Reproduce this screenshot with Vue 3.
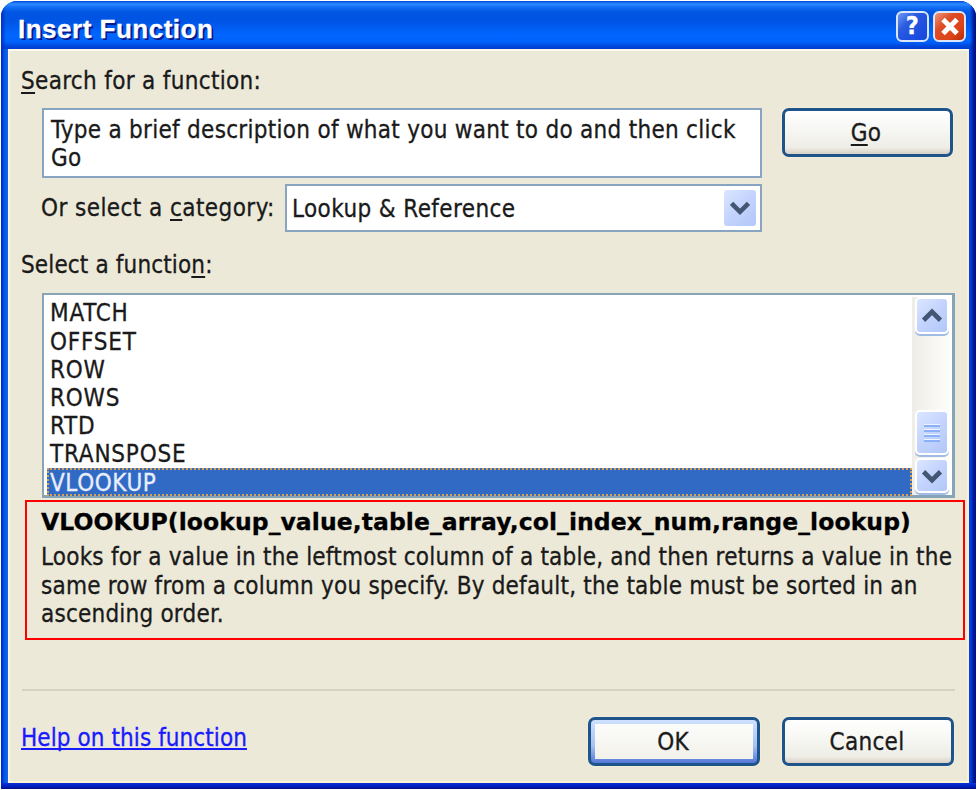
<template>
  <div class="dialog">
    <header class="title-bar">
      <h1 class="title-bar__text">Insert Function</h1>
      <button class="caption caption--help" aria-label="Help">?</button>
      <button class="caption caption--close" aria-label="Close">
        <svg viewBox="0 0 24 24" width="24" height="24">
          <path d="M5 4.5L19 18.5M19 4.5L5 18.5" stroke="#fff" stroke-width="5" />
        </svg>
      </button>
    </header>
    <main class="body">
      <label class="label label--search"><u>S</u>earch for a function:</label>
      <div class="search">
        <div class="search__fields">
          <div class="field search__input">
            Type a brief description of what you want to do and then click<br />Go
          </div>
          <div class="category">
            <label class="category__label">Or select a <u>c</u>ategory:</label>
            <div class="field category__select">
              <span class="category__value">Lookup &amp; Reference</span>
              <span class="arrow arrow--select">
                <svg viewBox="0 0 34 39" width="34" height="39">
                  <path d="M8 14L17 23L26 14" />
                </svg>
              </span>
            </div>
          </div>
        </div>
        <button class="btn btn--go"><span><u>G</u>o</span></button>
      </div>
      <label class="label label--select">Select a functio<u>n</u>:</label>
      <div class="list">
        <ul class="list__items">
          <li
            v-for="fn in functions"
            :key="fn"
            class="list__item"
            :class="{ 'list__item--selected': fn === selected }"
            @click="selected = fn"
          >
            {{ fn }}
          </li>
        </ul>
        <div class="scrollbar">
          <span class="arrow">
            <svg viewBox="0 0 32 34" width="32" height="34">
              <path d="M7 21.5L16 12.5L25 21.5" />
            </svg>
          </span>
          <span class="arrow scrollbar__thumb">
            <i v-for="n in 4" :key="n" class="scrollbar__grip"></i>
          </span>
          <span class="arrow">
            <svg viewBox="0 0 32 34" width="32" height="34">
              <path d="M7 12.5L16 21.5L25 12.5" />
            </svg>
          </span>
        </div>
      </div>
      <section class="details">
        <h2 class="details__syntax">
          VLOOKUP(lookup_value,table_array,col_index_num,range_lookup)
        </h2>
        <p class="details__text">
          Looks for a value in the leftmost column of a table, and then returns a value in the<br />
          same row from a column you specify. By default, the table must be sorted in an<br />
          ascending order.
        </p>
      </section>
      <hr class="divider" />
      <footer class="footer">
        <a class="footer__help" href="#">Help on this function</a>
        <button class="btn btn--default">OK</button>
        <button class="btn">Cancel</button>
      </footer>
    </main>
  </div>
</template>

<script setup>
import { ref } from "vue";

const functions = [
  "MATCH",
  "OFFSET",
  "ROW",
  "ROWS",
  "RTD",
  "TRANSPOSE",
  "VLOOKUP",
];
const selected = ref("VLOOKUP");
</script>

<style>
body {
  margin: 0;
  background: #fff;
}
</style>

<style scoped>
* {
  box-sizing: border-box;
}

.dialog {
  width: 975px;
  height: 788px;
  margin: 1px 0 0 1px;
  display: flex;
  flex-direction: column;
  overflow: hidden;
  border-radius: 16px 16px 0 0;
  background:
    linear-gradient(#0831d9 0, #0020c0 3px, #00108c 6px) bottom / 100% 6px no-repeat,
    linear-gradient(90deg, #0020c8 0, #0054e3 3px, #1566ee 7px) left / 50% 100% no-repeat,
    linear-gradient(270deg, #00107c 0, #0018a0 3px, #0040e0 6px) right / 50% 100% no-repeat;
  font-family: "DejaVu Sans Condensed", "DejaVu Sans", sans-serif;
  font-stretch: condensed;
  font-size: 24px;
  line-height: 28.2px;
  letter-spacing: 0.28px;
  color: #1a1a1a;
  -webkit-text-stroke-width: 0.3px;
}

button {
  padding: 0;
  font: inherit;
  letter-spacing: inherit;
  color: inherit;
}

u {
  text-decoration-thickness: 2px;
  text-underline-offset: 3px;
  text-decoration-skip-ink: none;
}

.title-bar {
  display: flex;
  align-items: flex-start;
  flex: none;
  height: 48px;
  padding: 10px 10px 0 17px;
  background:
    linear-gradient(270deg, #00107c 0, #001a9c 2px, rgba(0, 56, 200, 0) 6px),
    linear-gradient(90deg, #0030c8 0, rgba(0, 56, 200, 0) 5px),
    linear-gradient(#0048d8 0, #2e8cff 3px, #1470f4 6px, #0055e2 11px, #0054e4 20px, #0066ff 34px, #0062fa 41px, #0048dc 45px, #003ccc 48px);
}

.title-bar__text {
  flex: 1;
  margin: 4px 0 0;
  font-family: "Liberation Sans", sans-serif;
  font-size: 26px;
  font-weight: 700;
  letter-spacing: 0.5px;
  line-height: 28px;
  color: #fff;
  text-shadow: 2px 2px 0 #07198c;
}

.caption {
  display: flex;
  align-items: center;
  justify-content: center;
  width: 33px;
  height: 31px;
  margin-left: 4px;
  border: 2px solid #dce6fb;
  border-radius: 6px;
  color: #fff;
}

.caption--help {
  background: linear-gradient(135deg, #6f98f5, #2a5be0 35%, #1c4ee0 70%, #164adc);
  font-size: 25px;
  font-weight: 700;
}

.caption--close {
  background: linear-gradient(135deg, #ef967c, #dd4c26 35%, #dc4318 70%, #b82e06);
}

.body {
  flex: 1;
  margin: 0 7px 6px;
  padding: 16px 13px 0 12px;
  border: 2px solid #fbf3dc;
  border-bottom-color: #fff3d4;
  border-top-color: #fff8e8;
  border-right-color: #faf0d4;
  background: #ece9d8;
}

.label {
  display: block;
  margin-left: -1px;
}

.label--search {
  letter-spacing: 0.32px;
}

.search {
  display: flex;
  justify-content: space-between;
  margin: 13px 1px 0 20px;
}

.search__fields {
  width: 720px;
}

.field {
  border: 2px solid #87a5c0;
  background: #fff;
}

.search__input {
  height: 70px;
  padding: 6px 0 0 7px;
  white-space: nowrap;
}

.category {
  display: flex;
  justify-content: space-between;
  margin-top: 6px;
}

.category__label {
  margin-left: -1px;
  padding-top: 10px;
  letter-spacing: 0.43px;
  white-space: nowrap;
}

.category__select {
  display: flex;
  flex: none;
  justify-content: space-between;
  width: 477px;
  height: 48px;
  padding: 2px 2px 2px 5px;
}

.category__value {
  padding-top: 7px;
  letter-spacing: 0.4px;
}

.arrow {
  display: flex;
  flex: none;
  align-items: center;
  justify-content: center;
  width: 34px;
  height: 37px;
  border: 2px solid #fff;
  border-radius: 5px;
  background: linear-gradient(135deg, #dbe6ff, #c3d3fd 50%, #b2c8f8);
  box-shadow: 0 2px 0 #a0bbe4;
}

.arrow--select {
  width: 36px;
  height: 40px;
  box-shadow: none;
}

.arrow path {
  fill: none;
  stroke: #435672;
  stroke-width: 5;
}

.btn {
  display: flex;
  align-items: center;
  justify-content: center;
  width: 172px;
  height: 49px;
  padding-right: 2px;
  border: 3px solid #1f548a;
  border-radius: 7px;
  background: linear-gradient(#fff, #f5f5f1 50%, #eeede6 85%, #d9d0c5);
  box-shadow: 0 0 0 1px #f1eddd;
}

.btn--go {
  width: 171px;
  padding-right: 3px;
}

.btn--default {
  background: linear-gradient(#fcfcfb, #f2f1ea) center / 158px 35px no-repeat,
    linear-gradient(#cfe1ff, #a5c1f3 60%, #5578d8);
}

.label--select {
  margin-top: 19px;
  letter-spacing: 0.14px;
}

.list {
  display: flex;
  height: 205px;
  margin: 14px -1px 0 20px;
  padding: 3px 3px 0;
  border: 2px solid #87a5b8;
  border-width: 2px 3px 3px 2px;
  background: #fff;
}

.list__items {
  flex: 1;
  margin: 0;
  padding: 0;
  list-style: none;
}

.list__item {
  height: 28.2px;
  padding-left: 3px;
  line-height: 30px;
  letter-spacing: 0.8px;
}

.list__item--selected {
  outline: 2px dotted #d9a04e;
  outline-offset: -2px;
  background: #316ac5;
  color: #e8eefb;
  letter-spacing: 0.6px;
}

.scrollbar {
  display: flex;
  flex-direction: column;
  align-items: center;
  width: 38px;
  margin: -1px -1px 0 0;
  padding-left: 1px;
  background: linear-gradient(90deg, #efede8, #fdfdfa);
}

.scrollbar__thumb {
  flex-direction: column;
  gap: 2px;
  height: 45px;
  margin: auto 0 3px;
}

.scrollbar .arrow:last-child {
  height: 35px;
  margin-bottom: 2px;
}

.scrollbar__grip {
  width: 16px;
  height: 3px;
  border-top: 1px solid #eef4fe;
  background: #8cb0f8;
}

.details {
  width: 940px;
  height: 140px;
  margin: 2px 0 0 3px;
  padding: 5px 0 0 14px;
  border: 2px solid #f00;
  white-space: nowrap;
}

.details__syntax {
  margin: 0;
  font-family: "DejaVu Sans", sans-serif;
  font-stretch: normal;
  font-size: 23.5px;
  line-height: 30px;
  letter-spacing: 0.07px;
  color: #000;
}

.details__text {
  margin: 6px 0 0;
  letter-spacing: 0.21px;
}

.divider {
  height: 2px;
  margin: 49px -1px 0 0;
  border: 0;
  background: #d5d3c2;
}

.footer {
  display: flex;
  gap: 22px;
  margin: 26px 0 0 -1px;
}

.footer__help {
  margin: 7px auto 0 0;
  color: #1a1aff;
  letter-spacing: 0.08px;
  text-decoration-thickness: 2px;
  text-underline-offset: 2px;
  text-decoration-skip-ink: none;
}
</style>
